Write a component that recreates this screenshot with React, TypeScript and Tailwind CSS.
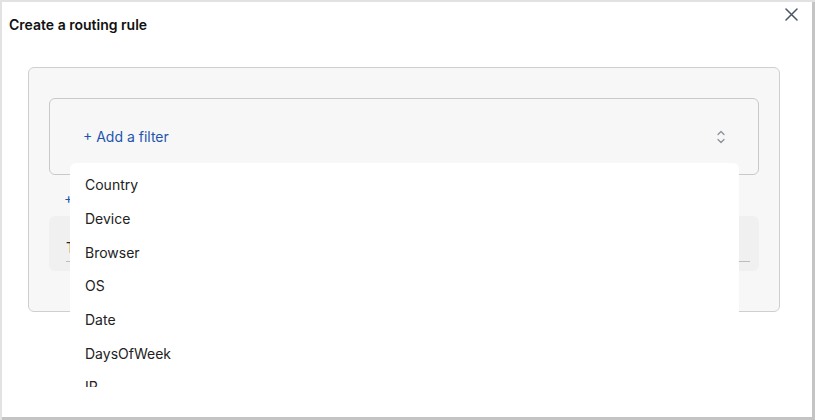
import React from "react";

const items = ["Country", "Device", "Browser", "OS", "Date", "DaysOfWeek", "IP"];

export default function App() {
  return (
    <div
      className="w-[815px] h-[420px] overflow-hidden bg-[#c4c4c4] border-t-2 border-l-2 border-t-[#e2e2e2] border-l-[#e2e2e2] pr-[3px] pb-[3px]"
      style={{ fontFamily: "Inter, 'Noto Sans', sans-serif" }}
    >
      <div className="relative h-full w-full bg-white flex flex-col">
        <div className="pl-[7px] pt-[13px] text-[14px] leading-5 font-semibold text-[#111]">
          Create a routing rule
        </div>
        <button className="absolute right-[14px] top-[6px] text-[#4b5563]">
          <svg width="13" height="13" viewBox="0 0 13 13" fill="none" stroke="currentColor" strokeWidth="1.5" strokeLinecap="round">
            <path d="M1 1L12 12M12 1L1 12" />
          </svg>
        </button>

        <div className="mt-[32px] ml-[26px] mr-[32px] h-[245px] rounded-md border border-[#cfcfcf] bg-[#f7f7f7] px-5 pt-[30px]">
          <div className="relative">
            <div className="h-[77px] rounded-md border border-[#c9c9c9] bg-[#f7f7f7] flex items-center justify-between pl-[33px] pr-[33px]">
              <span className="text-[14px] text-[#1f55ae]">+ Add a filter</span>
              <svg width="8" height="14" viewBox="0 0 8 14" fill="none" stroke="#8a8f98" strokeWidth="1.2" strokeLinecap="round" strokeLinejoin="round">
                <path d="M1 4.5L4 1.5L7 4.5" />
                <path d="M1 9.5L4 12.5L7 9.5" />
              </svg>
            </div>
            <div className="absolute left-[21px] top-[65px] z-10 w-[669px] h-[224px] overflow-hidden rounded-md bg-white pt-[5px]">
              {items.map((it) => (
                <div key={it} className="h-[33.67px] flex items-center pl-[15px] text-[14px] text-[#222]">
                  {it}
                </div>
              ))}
            </div>
          </div>
          <div className="mt-[15px] h-5 leading-5 pl-[15px] text-[14px] text-[#1f55ae]">+ Add a group</div>
          <div className="mt-[6px] h-[55px] rounded-md bg-[#f0f0f0] pl-[17px] pr-[9px] pt-[22px]">
            <div className="text-[14px] leading-5 text-[#222]">Then</div>
            <div className="h-px bg-[#bdbdbd] mt-[3px]" />
          </div>
        </div>
      </div>
    </div>
  );
}
